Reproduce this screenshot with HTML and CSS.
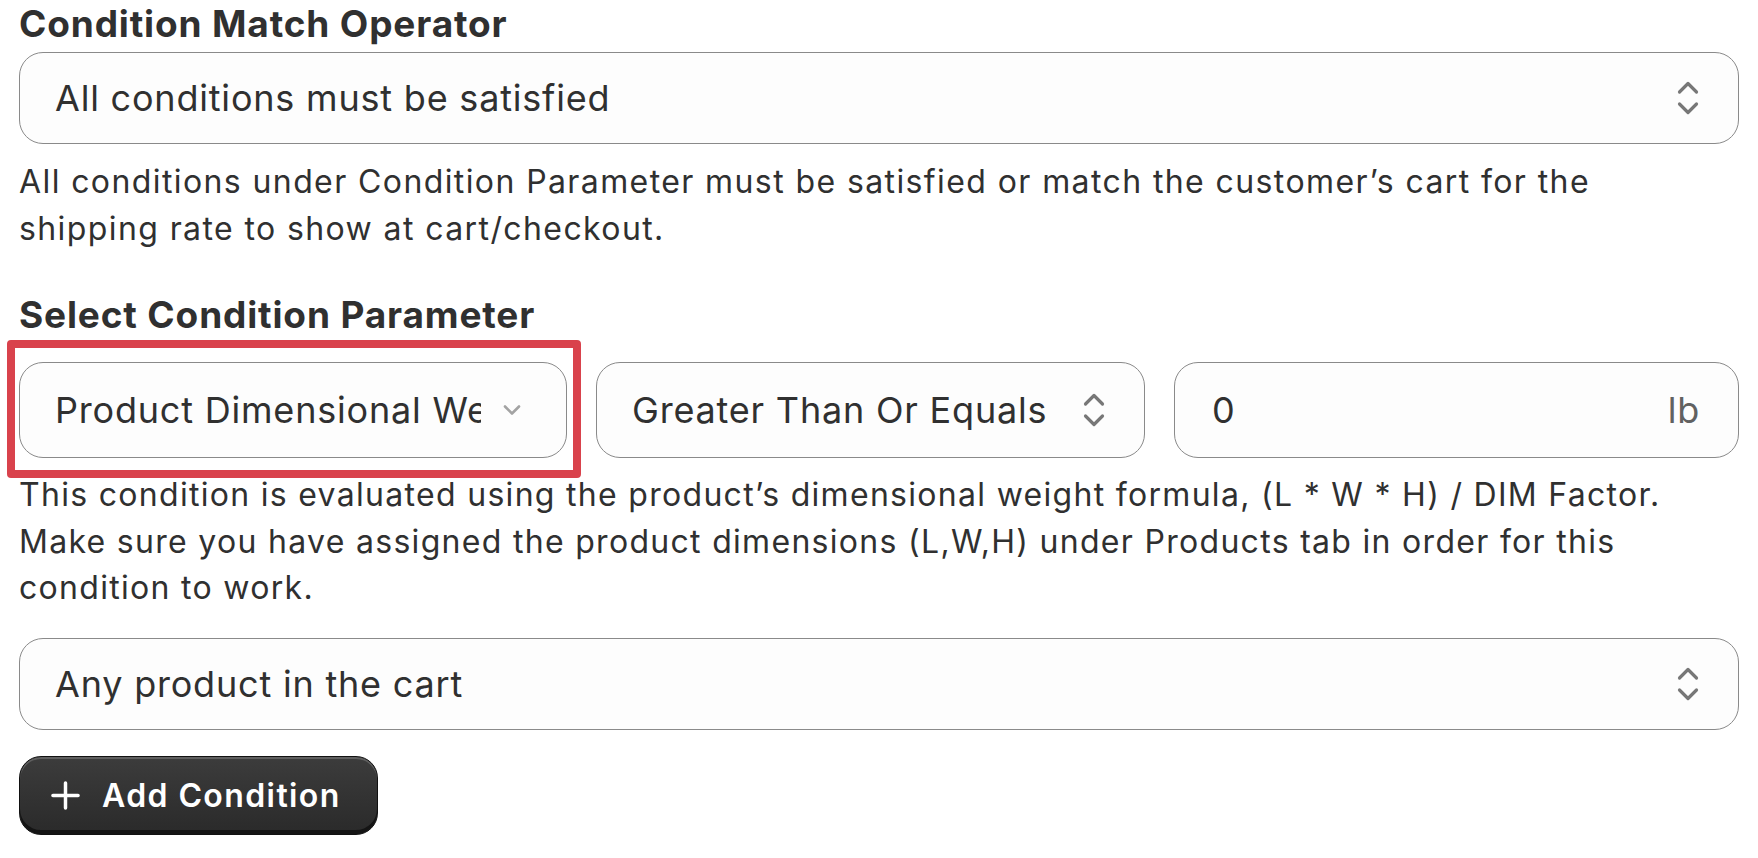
FILE: index.html
```html
<!DOCTYPE html>
<html lang="en">
<head>
  <meta charset="UTF-8" />
  <title>Shipping Rate Conditions</title>
  <meta name="viewport" content="width=device-width, initial-scale=1.0" />
  <link rel="stylesheet" href="styles.css">
</head>
<body>

  <!-- Match operator -->
  <section class="field">
    <h2 class="label">Condition Match Operator</h2>
    <div class="select">
      <span class="select-value">All conditions must be satisfied</span>
      <svg class="updown" viewBox="0 0 22 34"><path d="M2.5 11 L11 2.5 L19.5 11 M2.5 23 L11 31.5 L19.5 23" /></svg>
    </div>
    <p class="help">All conditions under Condition Parameter must be satisfied or match the customer’s cart for the<br>shipping rate to show at cart/checkout.</p>
  </section>

  <!-- Condition parameter -->
  <section class="field field-params">
    <h2 class="label">Select Condition Parameter</h2>
    <div class="param-row">
      <div class="highlight-wrap">
        <div class="select">
          <span class="select-value clipped">Product Dimensional Weight</span>
          <svg class="chevron" viewBox="0 0 18 10"><path d="M2 1.5 L9 8.5 L16 1.5" /></svg>
        </div>
        <div class="highlight"></div>
      </div>
      <div class="select">
        <span class="select-value">Greater Than Or Equals</span>
        <svg class="updown" viewBox="0 0 22 34"><path d="M2.5 11 L11 2.5 L19.5 11 M2.5 23 L11 31.5 L19.5 23" /></svg>
      </div>
      <div class="select text-input">
        <span class="select-value">0</span>
        <span class="suffix">lb</span>
      </div>
    </div>
    <p class="help">This condition is evaluated using the product’s dimensional weight formula, (L * W * H) / DIM Factor.<br>Make sure you have assigned the product dimensions (L,W,H) under Products tab in order for this<br>condition to work.</p>
    <div class="select">
      <span class="select-value">Any product in the cart</span>
      <svg class="updown" viewBox="0 0 22 34"><path d="M2.5 11 L11 2.5 L19.5 11 M2.5 23 L11 31.5 L19.5 23" /></svg>
    </div>
  </section>

  <button class="btn-primary">
    <svg class="plus" viewBox="0 0 30 30"><path d="M15 2 V28 M2 15 H28" /></svg>
    Add Condition
  </button>

</body>
</html>
```

FILE: styles.css
```css
body {
  font-family: Inter, "Noto Sans", sans-serif;
  color: #303030;
  background: #fff;
  margin: 0;
  padding: 1px 19px 0 19px;
}
.label {
  font-size: 37px;
  font-weight: 700;
  line-height: 46px;
  letter-spacing: 0.85px;
  margin: 0 0 5px 0;
}
.field-params {
  margin-top: 40px;
}
.select {
  display: flex;
  align-items: center;
  justify-content: space-between;
  box-sizing: border-box;
  height: 92px;
  padding: 0 39px 0 35px;
  background: #fdfdfd;
  border: 1.5px solid #8a8a8a;
  border-radius: 24px;
  font-size: 36px;
  letter-spacing: 0.8px;
}
.select-value {
  white-space: nowrap;
}
.clipped {
  width: 426px;
  overflow: hidden;
}
.updown {
  flex-shrink: 0;
  width: 22px;
  height: 34px;
  fill: none;
  stroke: #777;
  stroke-width: 3.2;
  stroke-linecap: round;
  stroke-linejoin: round;
}
.chevron {
  flex-shrink: 0;
  width: 18px;
  height: 10px;
  margin-right: 6px;
  fill: none;
  stroke: #a3a3a3;
  stroke-width: 2.6;
  stroke-linecap: round;
  stroke-linejoin: round;
}
.help {
  font-size: 32px;
  line-height: 47px;
  letter-spacing: 1.4px;
  margin: 14px 0 0 0;
}
.param-row {
  display: grid;
  grid-template-columns: 548px 549px 1fr;
  gap: 29px;
  margin-top: 24px;
}
.param-row .select {
  height: 96px;
}
.param-row + .help {
  line-height: 46.5px;
  letter-spacing: 1.3px;
  margin-top: 14px;
  margin-bottom: 26px;
}
.highlight-wrap {
  position: relative;
}
.highlight {
  position: absolute;
  left: -12px;
  top: -22px;
  right: -14px;
  bottom: -20px;
  border: 8px solid #d9424c;
  border-radius: 4px;
  pointer-events: none;
}
.text-input {
  padding-left: 37px;
  padding-right: 38px;
}
.suffix {
  color: #616161;
}
.btn-primary {
  display: flex;
  align-items: center;
  gap: 22px;
  margin-top: 26px;
  height: 79px;
  padding: 0 36px 0 31px;
  font-family: Inter, "Noto Sans", sans-serif;
  font-size: 32px;
  font-weight: 600;
  letter-spacing: 1.4px;
  color: #fff;
  background: linear-gradient(#3c3c3c, #2a2a2a);
  border: 1px solid #111;
  border-radius: 22px;
  box-shadow: inset 0 -4px 0 #141414, inset 0 2px 0 rgba(255, 255, 255, 0.18);
  cursor: pointer;
}
.plus {
  flex-shrink: 0;
  width: 29px;
  height: 29px;
  fill: none;
  stroke: #fff;
  stroke-width: 3.6;
  stroke-linecap: round;
}
```
